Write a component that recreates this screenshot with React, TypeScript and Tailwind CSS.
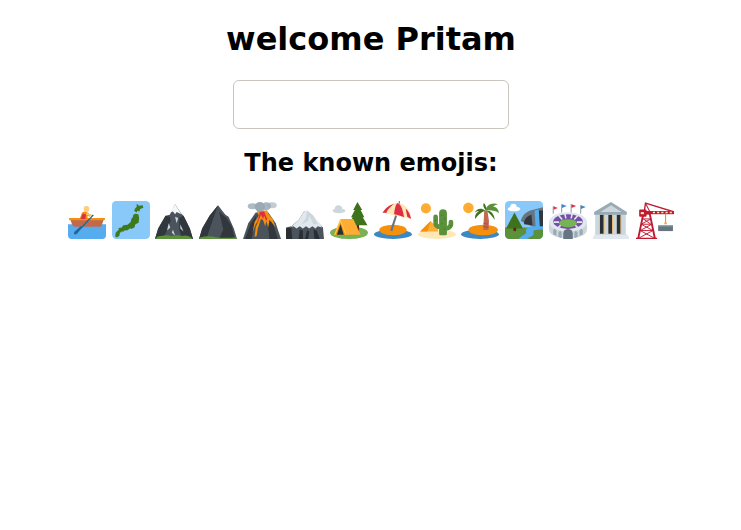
import React from "react";

function E({ label, children }: { label: string; children: React.ReactNode }) {
  return (
    <svg viewBox="0 0 36 36" role="img" aria-label={label} className="w-[38px] h-[38px] shrink-0">
      {children}
    </svg>
  );
}

const Boat = () => (
  <E label="rowboat">
    <path d="M0 22h36v10.500a3.500 3.500 0 0 1-3.500 3.500h-29A3.500 3.500 0 0 1 0 32.500z" fill="#55ACEE" />
    <path d="M2 17h32l-2 6a2 2 0 0 1-2 1.500H7a3 3 0 0 1-3-2z" fill="#C1694F" />
    <path d="M1 16h34v1.300a1 1 0 0 1-1 1H2a1 1 0 0 1-1-1z" fill="#F4900C" />
    <circle cx="17.500" cy="7.500" r="2.700" fill="#FFCC80" />
    <path d="M11 17l2-5.500c.5-1.500 3-1.800 4.500-1l4.500 2.500-1.500 2-2-1V17z" fill="#F4900C" />
    <path d="M12 17l2-5 3 .5-.5 4.500z" fill="#DD2E44" />
    <path d="M18 11.500l6 2-1 1.300-6-2z" fill="#FFCC80" />
    <path d="M24.500 13.500L13 26l-1-1L23.500 12.700z" fill="#269" />
    <path d="M13.500 25l-5 6c-1 1-2.800 1-2.800-.5 0-1 .8-1.800 1.500-2.300l5-4.500z" fill="#269" />
  </E>
);

const Japan = () => (
  <E label="map of Japan">
    <rect width="36" height="36" rx="4" fill="#88C9F9" />
    <path d="M23.500 2.500l2 2 3.500-.5.700 2.500-3 1-.7 2.500-2-.7-.5 1.700-2.500-1.500.800-2.500 1.500-1.300z" fill="#3E7A1D" />
    <path d="M22 12l3 .5.700 3.500-.5 4.500-3 1.500-1 3-3 1.500-1-.8-2.500 2-3 .2-1 1.200-1.500-.5-.5 1.500-1.500-1-1.200-3.600 3.200-.5 1.500-2 4-.5 3-2.500.8-3.500 1.200-1 .500-2.500z" fill="#3E7A1D" />
    <path d="M6 27.500l2.500.5-1 2-.5 3-2.500 1.500-1.500-1 .5-3.500z" fill="#3E7A1D" />
  </E>
);

const Peak = () => (
  <E label="snow-capped mountain">
    <path d="M0 36L3 26l7-12 4-1L19 3l6 9 2 2 6 12 3 10z" fill="#4B545D" />
    <path d="M0 36L3 26l7-12 4 1 1 4-3 5-1 5-4 7z" fill="#31373D" />
    <path d="M23 16l4-2 6 12 3 10H26l-3-9z" fill="#31373D" />
    <path d="M19 3l-4.500 8 2.500-1 2 2.500 1.500-2 4.500 2z" fill="#F5F8FA" />
    <path d="M19 15l3 1-1.500 5zM13 21l1.500 4-3 3zM24 22l3 7-3-3zM17 27l2 6-3-3z" fill="#CCD6DD" />
    <path d="M1 35q2-2.500 5-1.800 5-1.700 10 0 5-1.500 9 0 5-1.500 10 1.800v1H0z" fill="#5C913B" />
  </E>
);

const Mountain = () => (
  <E label="mountain">
    <path d="M0 36L3 26l7-12 8-10 7 9 3 2 5 11 3 10z" fill="#4B545D" />
    <path d="M0 36L3 26l7-12 8-10-5 14-2 6-4 12z" fill="#31373D" />
    <path d="M19 10l7 6 5 8 3 12H19l4-9z" fill="#31373D" />
    <path d="M1 34.500q7-2 14-.5t20 .5l1 1.500H0z" fill="#5C913B" />
  </E>
);

const Volcano = () => (
  <E label="volcano">
    <path d="M0 36l5-15 7-10h12l7 10 5 15z" fill="#4B545D" />
    <path d="M2 36l5-14 6-9-2 10-3 13z" fill="#31373D" />
    <path d="M22 14l7 9 4 13h-8l-1-10z" fill="#31373D" />
    <path d="M13 9h10l1 3 4 5 3 8-4-5-2-2-1 7-2-6-1 5-2-6-2-1-3 9-1 7-2 1 1-9 3-7-3 4-3 8 2-10 4-6z" fill="#F4900C" />
    <path d="M16 10h4l3 7-1 2-2-5-1 3-2-4-2 5-2 3 2-6z" fill="#DD2E44" />
    <ellipse cx="9" cy="5" rx="4.500" ry="2.800" fill="#99AAB5" opacity=".8" />
    <ellipse cx="16" cy="5.500" rx="5" ry="4.500" fill="#99AAB5" />
    <ellipse cx="22" cy="5" rx="4.500" ry="3.800" fill="#99AAB5" opacity=".85" />
    <ellipse cx="27.500" cy="4" rx="4.500" ry="2.800" fill="#99AAB5" opacity=".6" />
  </E>
);

const Fuji = () => (
  <E label="mount fuji">
    <path d="M0 36V25l5-1 7-6 5-8h3l9 9 6 6 1 11z" fill="#4B545D" />
    <path d="M0 36V26l5-1 1 11zM12 36l1-9 3 1v8zM27 36l-1-9 3 1 3 8zM18 36l2-8 2 1-1 7z" fill="#292F33" />
    <path d="M4 25l8-7 5-8 3-1 6 5 7 9 1 2-4-1-2 2-3-2-3 2-3-2-3 2-3-2-3 2-3-2z" fill="#E1E8ED" />
    <path d="M20 9l-1 7-4 6 6-3 1-5 4 8 4 0-4-8z" fill="#CCD6DD" />
  </E>
);

const Camp = () => (
  <E label="camping">
    <ellipse cx="18" cy="30" rx="18" ry="6" fill="#77B255" />
    <ellipse cx="8.500" cy="9.300" rx="6" ry="2.300" fill="#CCD6DD" />
    <circle cx="8" cy="7.500" r="3.500" fill="#CCD6DD" />
    <rect x="25" y="20" width="2.500" height="9" fill="#662113" />
    <path d="M26 1l4.500 7.500-1.500 0 3.500 7-1.500 0 4.500 7.500H17.500l4-7.500h-1.500l3.500-7H22z" fill="#3E721D" />
    <path d="M10 17h12l7 15H8z" fill="#FFAC33" />
    <path d="M10 17l5 15H3.500z" fill="#F4900C" />
    <path d="M10 22l3 10H6.500z" fill="#292F33" />
    <path d="M10 17l-6 15 1 .3 5-12.500 4.500 12.200 1-.3z" fill="#FFCC4D" />
  </E>
);

const Beach = () => (
  <E label="beach with umbrella">
    <ellipse cx="18" cy="31.500" rx="18" ry="4.500" fill="#3B88C3" />
    <ellipse cx="18" cy="27.500" rx="13" ry="5" fill="#F4900C" />
    <path d="M20.500 12l1.800.6-5 16-2-.6z" fill="#66757F" />
    <path d="M8 11C11 5 18 1 24 2c5.500 1 11 7 11 15z" fill="#FFE8B6" />
    <path d="M8 11.500c2-4 6-7.500 11-9-3 2.500-6 5-7.500 9-1-.5-2.500-.500-3.500 0z" fill="#DD2E44" />
    <path d="M22 2c3 1 5 4 6.500 13.500-3-1.500-6-2.500-9.500-3 .5-4 1-8 3-10.500z" fill="#DD2E44" />
    <path d="M30 7c3 2.500 4.500 6 5 10l-3.500-2z" fill="#DD2E44" />
    <rect x="23.500" y="0" width="1" height="2.500" fill="#66757F" />
  </E>
);

const Desert = () => (
  <E label="desert">
    <ellipse cx="18" cy="31.500" rx="18" ry="4.500" fill="#FFE8B6" />
    <circle cx="7.500" cy="7" r="4.800" fill="#FFAC33" />
    <path d="M2 29l10-10 7 7v3z" fill="#FFAC33" />
    <path d="M12 19l-3 10H2z" fill="#F4900C" />
    <path d="M20 11.500a3.700 3.700 0 0 1 7.400 0V31a1.500 1.500 0 0 1-1.500 1.500h-4.400A1.500 1.500 0 0 1 20 31z" fill="#5C913B" />
    <path d="M14.500 15a2.200 2.200 0 0 1 4.400 0v5.500c0 1 .5 1.500 1.500 1.500v4.500c-3.500 0-5.900-2.500-5.900-5.500z" fill="#5C913B" />
    <path d="M29 20a2.200 2.200 0 0 1 4.400 0v2c0 3-3 6-6.400 6v-4.500c1 0 2-1 2-2z" fill="#5C913B" />
    <path d="M22 13h1v1h-1zM25 16h1v1h-1zM22 21h1v1h-1zM25 26h1v1h-1zM16 18h1v1h-1zM30.500 23h1v1h-1z" fill="#3E721D" />
  </E>
);

const Island = () => (
  <E label="desert island">
    <ellipse cx="18" cy="31.500" rx="18" ry="4.500" fill="#3B88C3" />
    <ellipse cx="21" cy="27.500" rx="14" ry="5" fill="#F4900C" />
    <circle cx="7" cy="6.500" r="5" fill="#FFAC33" />
    <path d="M22 9h3l1.500 10-.5 8.500h-5l.5-8.500z" fill="#C1694F" />
    <path d="M21 21l5 1M21 24l5 1" stroke="#A0041E" strokeOpacity=".3" strokeWidth="1" />
    <path d="M23 9c-4-3-8-2-10 2 2-1 3-1.500 4-1-3 1-4 4-3.500 7 2-3 5-6 9.500-8z" fill="#3E721D" />
    <path d="M23 9c1-5 6-8 12-6-2 .5-4 1.500-4.500 2.500 3 0 5 2.500 5.500 6-3-2.500-8-3-13-2.500z" fill="#5C913B" />
    <path d="M24 9c4 0 7.500 3 8 9-2-3-5-6.500-8-9z" fill="#3E721D" />
    <path d="M24 9c-2.500-2-3.500-4-2.500-7 1.500 1 2.500 3.500 2.500 7z" fill="#3E721D" />
  </E>
);

const Park = () => (
  <E label="national park">
    <rect width="36" height="36" rx="4" fill="#88C9F9" />
    <path d="M0 25h36v7a4 4 0 0 1-4 4H4a4 4 0 0 1-4-4z" fill="#5C913B" />
    <ellipse cx="8.500" cy="7.500" rx="6" ry="2.300" fill="#fff" />
    <circle cx="8" cy="5.500" r="3" fill="#fff" />
    <path d="M15 19c1-6 6-9 9-10l12-3v19H28l-5-2-4-2z" fill="#66757F" />
    <path d="M18 22c0-6 4-8 7-9l1 10z" fill="#31373D" />
    <path d="M31 9h5v16h-4z" fill="#31373D" />
    <path d="M28 9l4-1 1 17h-4z" fill="#55ACEE" />
    <path d="M9 11l8 15H1z" fill="#3E721D" />
    <rect x="8" y="25.500" width="2.500" height="3" fill="#662113" />
    <path d="M36 24h-8c-5 0-9 2-8 5s-4 3-7 7h8c3-3 7-3 6-6s4-3 9-3z" fill="#55ACEE" />
  </E>
);

const Stadium = () => (
  <E label="stadium">
    <path d="M0 21c0-6 8-10 18-10s18 4 18 10v6c0 5-8 8.500-18 8.500S0 32 0 27z" fill="#CCD6DD" />
    <ellipse cx="18" cy="20" rx="18" ry="9" fill="#E1E8ED" />
    <ellipse cx="18" cy="19.500" rx="14" ry="7" fill="#744EAA" />
    <path d="M9 13.500l3.500 4M15 12l1 4.500M22 12l-1 4.500M27.500 13.500l-3.500 4M4.500 20h5M31.500 20h-5M9 25l3-3M27 25l-3-3" stroke="#E1E8ED" strokeWidth="1.500" />
    <ellipse cx="18" cy="21" rx="8.500" ry="3.800" fill="#77B255" />
    <path d="M13.500 36v-5a4.500 4.500 0 0 1 9 0v5z" fill="#66757F" />
    <path d="M4 31.500v-3.500a1.500 1.500 0 0 1 3 0v5zM9 34v-4a1.500 1.500 0 0 1 3 0v5zM24 35v-5a1.500 1.500 0 0 1 3 0v4zM29 33v-5a1.500 1.500 0 0 1 3 0v3.500z" fill="#99AAB5" />
    <path d="M4 5v7M12 3v8M21 3v8M30 4v8" stroke="#66757F" strokeWidth=".7" />
    <path d="M4.300 5l4 1.700-4 1.700z" fill="#DD2E44" />
    <path d="M12.300 3l4.500 1.800-4.500 1.800z" fill="#3B88C3" />
    <path d="M21.300 3l4.500 1.800-4.500 1.800z" fill="#DD2E44" />
    <path d="M30.300 4l4.500 1.800-4.500 1.800z" fill="#3B88C3" />
  </E>
);

const Classical = () => (
  <E label="classical building">
    <path d="M1 36v-2l2-2.500h30l2 2.500v2z" fill="#E1E8ED" />
    <rect x="3" y="11" width="29" height="21" fill="#CCD6DD" />
    <rect x="7.500" y="13" width="3.500" height="18" fill="#292F33" />
    <rect x="15.500" y="13" width="3.500" height="18" fill="#292F33" />
    <rect x="23.500" y="13" width="3.500" height="18" fill="#292F33" />
    <rect x="11" y="14" width="1" height="17" fill="#FFAC33" opacity=".6" />
    <rect x="19" y="14" width="1" height="17" fill="#FFAC33" opacity=".6" />
    <rect x="27" y="14" width="1" height="17" fill="#FFAC33" opacity=".6" />
    <path d="M18 1L2 10.500V13h31v-2.500z" fill="#99AAB5" />
    <path d="M18 4L8 10.500h20z" fill="#CCD6DD" />
  </E>
);

const Crane = () => (
  <E label="building construction">
    <path d="M2 36L7 12h6l5 24" fill="none" stroke="#BE1931" strokeWidth="1.800" />
    <path d="M6 17h8M5 22h10M4 28h12M7 17l7 5M14 17l-9 5M5 22l11 6M15 22L4 28M4 28l13 7M16 28L3 35" stroke="#BE1931" strokeWidth=".9" fill="none" />
    <path d="M0 34.800h20V36H0z" fill="#BE1931" />
    <path d="M8 9l1-7 26 8v1" fill="none" stroke="#BE1931" strokeWidth="1.300" />
    <path d="M9 2l4 8" fill="none" stroke="#BE1931" strokeWidth="1" />
    <rect x="5" y="9.500" width="31" height="3" fill="#BE1931" />
    <path d="M16 10.300h2v1.300h-2zM20 10.300h2v1.300h-2zM24 10.300h2v1.300h-2zM28 10.300h2v1.300h-2zM32 10.300h2v1.300h-2z" fill="#FFE8B6" />
    <rect x="3" y="8" width="7" height="7" rx="1" fill="#BE1931" />
    <rect x="4.500" y="10.500" width="3" height="2" fill="#FFE8B6" />
    <rect x="27.500" y="12" width="1" height="9" fill="#F4900C" />
    <circle cx="28" cy="21" r="1.200" fill="#FFAC33" />
    <rect x="21" y="23" width="14" height="5.500" fill="#66757F" />
    <rect x="21" y="23" width="14" height="1" fill="#99AAB5" />
  </E>
);

export default function App() {
  return (
    <div className="min-h-[530px] bg-white flex flex-col items-center font-['DejaVu_Sans',sans-serif] text-black">
      <h1 className="mt-[20px] ml-[1px] text-[32px] leading-[38px] font-bold">welcome Pritam</h1>
      <input
        aria-label="name"
        className="mt-[22px] w-[276px] h-[49px] rounded-[6px] border border-[#c9c5bc] bg-white ml-[1px]"
      />
      <h2 className="mt-[20px] text-[24px] leading-[28px] font-bold ml-[1px]">The known emojis:</h2>
      <div className="mt-[24px] ml-[1px] flex justify-center gap-[5.7px]">
        <Boat />
        <Japan />
        <Peak />
        <Mountain />
        <Volcano />
        <Fuji />
        <Camp />
        <Beach />
        <Desert />
        <Island />
        <Park />
        <Stadium />
        <Classical />
        <Crane />
      </div>
    </div>
  );
}
